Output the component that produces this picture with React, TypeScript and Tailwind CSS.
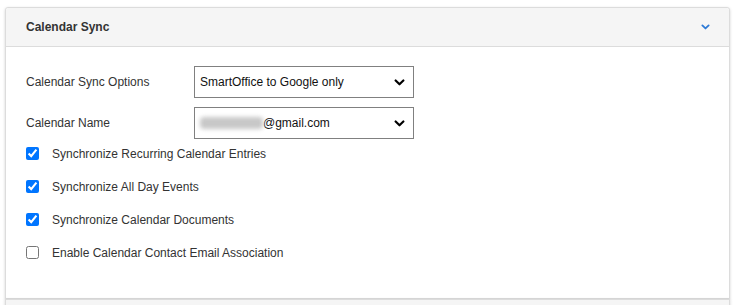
import React from 'react'

function Chevron({ className }: { className?: string }) {
  return (
    <svg viewBox="0 0 10 6" className={className} fill="none" stroke="currentColor" strokeWidth={2} strokeLinecap="round" strokeLinejoin="round">
      <path d="M1.5 1.2 L5 4.6 L8.5 1.2" />
    </svg>
  )
}

function FakeSelect({ children }: { children: React.ReactNode }) {
  return (
    <div className="w-[220px] h-[32px] border border-[#808080] bg-white flex items-center pl-[5px] pr-[8px] text-[12px] text-[#111]">
      <div className="flex-1 flex items-center">{children}</div>
      <Chevron className="w-[11px] h-[7px] text-black" />
    </div>
  )
}

const checks = [
  { label: 'Synchronize Recurring Calendar Entries', checked: true },
  { label: 'Synchronize All Day Events', checked: true },
  { label: 'Synchronize Calendar Documents', checked: true },
  { label: 'Enable Calendar Contact Email Association', checked: false },
]

export default function App() {
  return (
    <div className="w-[735px] h-[305px] overflow-hidden bg-white pt-[7px] px-[5px]" style={{ fontFamily: '"Liberation Sans", Arial, sans-serif' }}>
      <div className="w-[725px] border border-[#dcdcdc] rounded-t-[3px] shadow-[0_1px_3px_rgba(0,0,0,0.18)] bg-white">
        <div className="h-[39px] bg-[#f5f5f5] border-b border-[#dcdcdc] rounded-t-[3px] flex items-center justify-between pl-[20px] pr-[19px]">
          <span className="text-[12px] font-bold text-[#333]">Calendar Sync</span>
          <Chevron className="w-[9px] h-[6px] text-[#2d7ad6]" />
        </div>

        <div className="pt-[19px] pb-[29px] px-[20px] text-[12px] text-[#333]">
          <div className="flex items-center mb-[9px]">
            <div className="w-[168px]">Calendar Sync Options</div>
            <FakeSelect>SmartOffice to Google only</FakeSelect>
          </div>
          <div className="flex items-center">
            <div className="w-[168px]">Calendar Name</div>
            <FakeSelect>
              <span className="inline-block w-[63px] h-[12px] bg-[#c8c8c8] blur-[2px] rounded-sm" />
              <span>@gmail.com</span>
            </FakeSelect>
          </div>

          <div className="-mt-[2px]">
            {checks.map((c) => (
              <label key={c.label} className="h-[33px] flex items-center">
                <input type="checkbox" defaultChecked={c.checked} className="w-[13px] h-[13px] m-0 accent-[#0075ff]" />
                <span className="ml-[13px]">{c.label}</span>
              </label>
            ))}
          </div>
        </div>
      </div>
      <div className="w-[725px] h-[20px] border border-[#dcdcdc] bg-[#f5f5f5] shadow-[0_1px_3px_rgba(0,0,0,0.18)]" />
    </div>
  )
}
